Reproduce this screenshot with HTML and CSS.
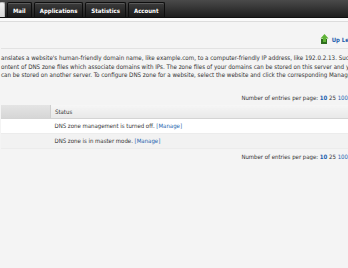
FILE: index.html
```html
<!DOCTYPE html>
<html lang="en">
<head>
    <meta charset="UTF-8">
    <title>DNS Settings</title>
    <link rel="stylesheet" href="styles.css">
</head>
<body>
    <div class="topbar">
        <div class="tabs">
            <a class="tab tab-active"></a>
            <a class="tab">Mail</a>
            <a class="tab">Applications</a>
            <a class="tab">Statistics</a>
            <a class="tab">Account</a>
        </div>
    </div>
    <div class="strip"></div>

    <div class="page">
        <div class="toolbar">
            <a class="up-link" href="#">
                <svg class="up-icon" width="9" height="10" viewBox="0 0 9 10">
                    <rect x="1" y="5" width="6" height="5" fill="#2f6d1f"/>
                    <path d="M4.5 0 L8.5 4.5 L6 4.5 L6 8 L3 8 L3 4.5 L0.5 4.5 Z" fill="#5fb336"/>
                </svg>
                Up Level
            </a>
        </div>

        <p class="intro">
            anslates a website's human-friendly domain name, like example.com, to a computer-friendly IP address, like 192.0.2.13. Such translation<br>
            ontent of DNS zone files which associate domains with IPs. The zone files of your domains can be stored on this server and you can<br>
            can be stored on another server. To configure DNS zone for a website, select the website and click the corresponding Manage link.
        </p>

        <div class="pager pager-top">
            Number of entries per page: <a href="#" class="current">10</a> <span>25</span> <a href="#">100</a>
        </div>

        <table class="list">
            <tr class="list-head">
                <th class="col-name"></th>
                <th>Status</th>
            </tr>
            <tr>
                <td class="col-name"></td>
                <td>DNS zone management is turned off. <a href="#">[Manage]</a></td>
            </tr>
            <tr class="odd">
                <td class="col-name"></td>
                <td>DNS zone is in master mode. <a href="#">[Manage]</a></td>
            </tr>
        </table>

        <div class="pager pager-bottom">
            Number of entries per page: <a href="#" class="current">10</a> <span>25</span> <a href="#">100</a>
        </div>
    </div>
</body>
</html>
```

FILE: styles.css
```css
html, body {
    overflow: hidden;
}

body {
    margin: 0;
    width: 362px;
    background-color: #f4f4f4;
    font-family: 'DejaVu Sans Condensed', 'DejaVu Sans', sans-serif;
    font-size: 6px;
    color: #333;
}

a {
    color: #1d5fae;
    text-decoration: none;
}

.topbar {
    height: 17px;
    background: linear-gradient(to bottom, #4a4a4a, #1e1e1e);
    border-bottom: 1px solid #111;
}

.tabs {
    display: flex;
    gap: 2px;
    height: 100%;
    align-items: flex-end;
}

.tab {
    height: 14px;
    padding: 0 5px;
    display: flex;
    align-items: center;
    background: linear-gradient(to bottom, #3c3c3c, #1a1a1a);
    border: 1px solid #0e0e0e;
    border-bottom: none;
    border-radius: 2px 2px 0 0;
    color: #fff;
    font-weight: bold;
    box-shadow: inset 0 1px 0 #5a5a5a;
}

.tab-active {
    width: 4px;
    padding: 0;
    margin-left: -1px;
    background: linear-gradient(to bottom, #f0f0f0, #d8d8d8);
    border-color: #bbb;
    box-shadow: none;
}

.strip {
    height: 3px;
    background-color: #fafafa;
    border-bottom: 1px solid #dcdcdc;
}

.page {
    padding: 0 0 0 1px;
}

.toolbar {
    display: flex;
    justify-content: flex-end;
    align-items: center;
    height: 18px;
    padding: 8px 4px 0 0;
    border-bottom: 1px solid #e2e2e2;
}

.up-link {
    display: flex;
    align-items: center;
    gap: 3px;
    font-weight: bold;
}

.intro {
    margin: 5px 0 0;
    font-size: 6.2px;
    line-height: 8.5px;
    white-space: nowrap;
}

.pager {
    text-align: right;
    padding-right: 14px;
    line-height: 7px;
    white-space: nowrap;
}

.pager-top {
    margin: 14px 0 4px;
}

.pager-bottom {
    margin: 4px 0 0;
}

.pager .current {
    font-weight: bold;
}

.list {
    width: 100%;
    border-collapse: collapse;
}

.list th,
.list td {
    text-align: left;
    padding: 0 4px;
    height: 14px;
    white-space: nowrap;
}

.list th {
    height: 13px;
    font-weight: normal;
    background: linear-gradient(to bottom, #f6f6f6, #e8e8e8);
    border-bottom: 1px solid #d4d4d4;
}

.list th.col-name {
    background: linear-gradient(to bottom, #e4e4e4, #d6d6d6);
    border-right: 1px solid #cfcfcf;
}

.list .col-name {
    width: 41px;
}

.list td {
    background-color: #fff;
    border-bottom: 1px solid #ececec;
}

.list .odd td {
    background-color: #f2f2f2;
}
```
